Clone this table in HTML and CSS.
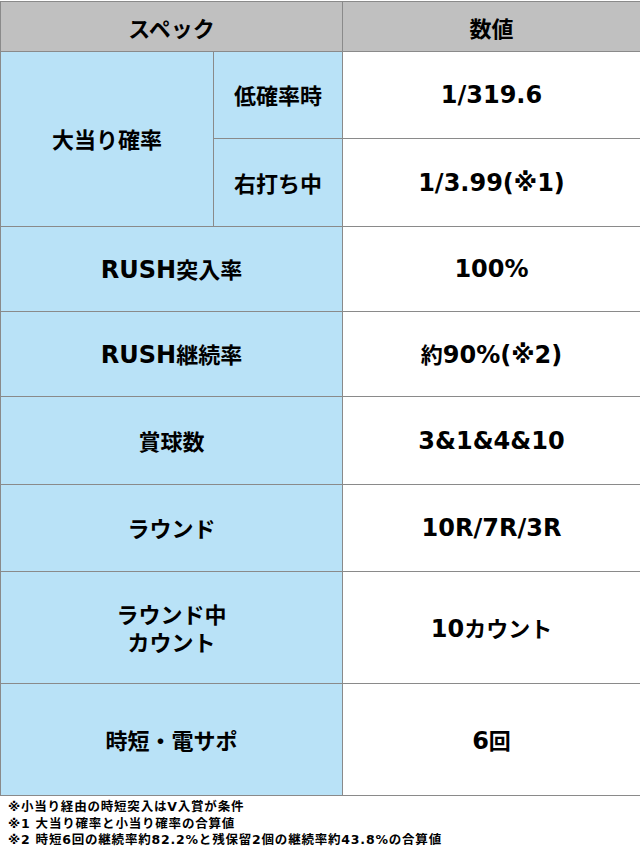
FILE: index.html
```html
<!DOCTYPE html>
<html lang="ja">
<head>
<meta charset="utf-8">
<link rel="stylesheet" href="styles.css">
</head>
<body>
<table class="spec">
  <colgroup>
    <col class="c1"><col class="c2"><col class="c3">
  </colgroup>
  <thead>
    <tr class="h"><th colspan="2">スペック</th><th>数値</th></tr>
  </thead>
  <tbody>
    <tr class="r87"><td class="k" rowspan="2"><span class="j">大当り確率</span></td><td class="k"><span class="j">低確率時</span></td><td class="v">1/319.6</td></tr>
    <tr class="r88"><td class="k"><span class="j">右打ち中</span></td><td class="v">1/3.99(※1)</td></tr>
    <tr class="r85"><td class="k" colspan="2">RUSH<span class="j">突入率</span></td><td class="v">100%</td></tr>
    <tr class="r85"><td class="k" colspan="2">RUSH<span class="j">継続率</span></td><td class="v"><span class="j">約</span>90%(※2)</td></tr>
    <tr class="r88"><td class="k" colspan="2"><span class="j">賞球数</span></td><td class="v">3&amp;1&amp;4&amp;10</td></tr>
    <tr class="r87"><td class="k" colspan="2"><span class="j">ラウンド</span></td><td class="v">10R/7R/3R</td></tr>
    <tr class="r112"><td class="k tight" colspan="2"><span class="j">ラウンド中<br>カウント</span></td><td class="v">10<span class="j">カウント</span></td></tr>
    <tr class="r112"><td class="k" colspan="2"><span class="j">時短・電サポ</span></td><td class="v">6<span class="j">回</span></td></tr>
  </tbody>
</table>
<div class="notes">
  <p>※小当り経由の時短突入はV入賞が条件</p>
  <p>※1 大当り確率と小当り確率の合算値</p>
  <p>※2 時短6回の継続率約82.2%と残保留2個の継続率約43.8%の合算値</p>
</div>
</body>
</html>
```
FILE: styles.css
```css
html, body {
  margin: 0;
  padding: 0;
  background: #fff;
}
body {
  width: 640px;
  font-family: "DejaVu Sans", "Noto Sans CJK JP", sans-serif;
  font-weight: bold;
  color: #000;
  padding-top: 1px;
}
.spec {
  width: 640px;
  border-collapse: collapse;
  table-layout: fixed;
}
.c1 { width: 213px; }
.c2 { width: 129px; }
.c3 { width: 298px; }
.spec th, .spec td {
  border: 1px solid #8a8a8a;
  padding: 0;
  text-align: center;
  vertical-align: middle;
  font-size: 24px;
  line-height: 28px;
}
.h th {
  background: #c0c0c0;
  height: 49px;
  font-family: "Noto Sans CJK JP", sans-serif;
  font-size: 22px;
  font-weight: bold;
}
.k {
  background: #b9e2f7;
}
.j {
  font-family: "Noto Sans CJK JP", sans-serif;
  font-size: 22px;
}
.v {
  background: #fff;
  padding-top: 2px;
}
.spec td.tight { line-height: 26px; }
.tight .j { display: inline-block; line-height: 28px; }
.r85 td { height: 84px; }
.r87 td { height: 86px; }
.r88 td { height: 87px; }
.r112 td { height: 111px; }
.notes {
  padding: 3px 0 0 8px;
  font-family: "DejaVu Sans", "Noto Sans CJK JP", sans-serif;
  font-size: 12.5px;
  line-height: 16.5px;
  letter-spacing: 0.8px;
}
.notes p { margin: 0; }
```
